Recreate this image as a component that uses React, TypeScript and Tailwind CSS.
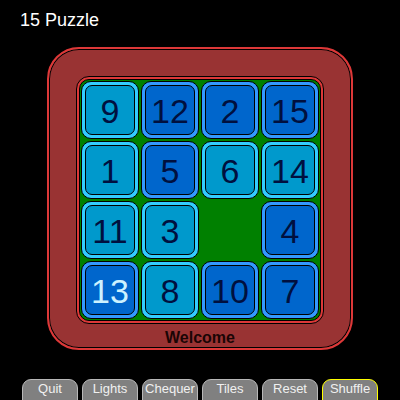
const tiles: (number | null)[] = [9, 12, 2, 15, 1, 5, 6, 14, 11, 3, null, 4, 13, 8, 10, 7];

// dark tiles are the ones drawn in the deeper blue
const dark = [12, 2, 15, 5, 4, 13, 10, 7];

const buttons = ["Quit", "Lights", "Chequer", "Tiles", "Reset", "Shuffle"];

const Tile = ({ n }: { n: number | null }) => {
  if (n === null) return <div className="w-[58px] h-[58px]" />;
  const isDark = dark.includes(n);
  return (
    <div
      className={`w-[58px] h-[58px] rounded-[10px] border border-black p-[3px] ${
        isDark ? "bg-[#3399ff]" : "bg-[#33ccff]"
      }`}
    >
      <div
        className={`w-full h-full rounded-[7px] border border-black flex items-center justify-center pt-[2px] text-[34px] leading-none ${
          isDark ? "bg-[#0066cc]" : "bg-[#0099cc]"
        } ${n === 13 ? "text-[#ccf2ff]" : "text-[#00103f]"}`}
      >
        {n}
      </div>
    </div>
  );
};

export default function App() {
  return (
    <div
      className="w-[400px] h-[400px] bg-black overflow-hidden flex flex-col"
      style={{ fontFamily: '"Liberation Sans", Arial, sans-serif' }}
    >
      <h1 className="ml-[20px] mt-[11px] text-[18px] leading-none text-white">15 Puzzle</h1>

      {/* Frame */}
      <div className="ml-[47px] mt-[18px] w-[306px] h-[306px] rounded-[32px] border-2 border-[#dd3838] bg-[#993333] shadow-[inset_0_0_0_1px_#000] pt-[27px] flex flex-col items-center">
        <div className="w-[248px] h-[248px] rounded-[13px] border border-black bg-[#dd3838] p-[2px]">
          <div className="w-full h-full rounded-[10px] border border-black bg-[#008000] p-px grid grid-cols-4 gap-[2px]">
            {tiles.map((n, i) => (
              <Tile key={i} n={n} />
            ))}
          </div>
        </div>
        <p className="mt-[4px] text-[16px] font-bold text-[#1a0505] leading-[20px]">Welcome</p>
      </div>

      {/* Buttons */}
      <div className="ml-[22px] mt-[29px] flex gap-[4px]">
        {buttons.map((b) => (
          <div
            key={b}
            className={`w-[56px] h-[22px] rounded-t-[9px] border bg-[#808080] text-[#f0f0f0] text-[13px] leading-[16px] text-center pt-[1px] ${
              b === "Shuffle" ? "border-[#ffff00]" : "border-[#b8b8b8]"
            }`}
          >
            {b}
          </div>
        ))}
      </div>
    </div>
  );
}
